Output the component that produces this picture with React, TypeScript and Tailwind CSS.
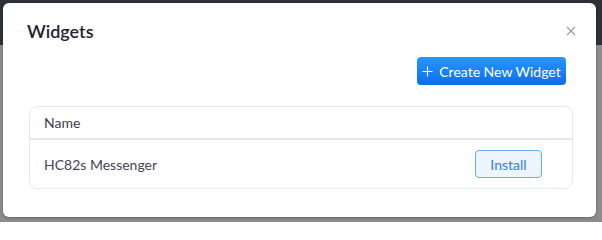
import React from 'react'

export default function App() {
  return (
    <div className="relative w-[602px] h-[222px] overflow-hidden bg-[#8d8d8d] font-['Lato','Noto_Sans',sans-serif]">
      {/* page behind the overlay */}
      <div className="h-[45px] bg-[#2e3138]" />

      <div className="absolute left-[3px] top-[3px] w-[593px] h-[214px] bg-white rounded-[6px] shadow-[0_1px_3px_rgba(0,0,0,0.3)] flex flex-col">
        <div className="flex items-start justify-between pl-[24px] pr-[20px] pt-[17px]">
          <h2 className="text-[18px] leading-[22px] font-semibold text-[#232333]">Widgets</h2>
          <button className="mt-[6px] text-[#9a9a9a]" aria-label="Close">
            <svg width="10" height="10" viewBox="0 0 10 10" fill="none" stroke="currentColor" strokeWidth="1.1">
              <path d="M1 1L9 9M9 1L1 9" />
            </svg>
          </button>
        </div>

        <div className="flex justify-end pr-[30px] mt-[15px]">
          <button className="h-[28px] w-[149px] flex items-center justify-center gap-[6px] rounded-[4px] bg-gradient-to-b from-[#2a95ff] to-[#0b6ee9] text-white text-[14px]">
            <svg width="11" height="11" viewBox="0 0 11 11" fill="none" stroke="currentColor" strokeWidth="1.2">
              <path d="M5.5 0.5V10.5M0.5 5.5H10.5" />
            </svg>
            Create New Widget
          </button>
        </div>

        <div className="ml-[26px] mr-[23px] mt-[21px] border border-[#e3e8ef] rounded-[8px]">
          <div className="h-[33px] flex items-center pl-[14px] border-b-2 border-[#e1e8f1] text-[14px] text-[#3d3d4d]">
            Name
          </div>
          <div className="h-[48px] flex items-center justify-between pl-[14px] pr-[30px] text-[14px] text-[#454555]">
            <span>HC82s Messenger</span>
            <button className="h-[28px] w-[67px] rounded-[4px] border border-[#6aa9f3] bg-[#edf5ff] text-[#2d7ff0] text-[14px]">
              Install
            </button>
          </div>
        </div>
      </div>
    </div>
  )
}
